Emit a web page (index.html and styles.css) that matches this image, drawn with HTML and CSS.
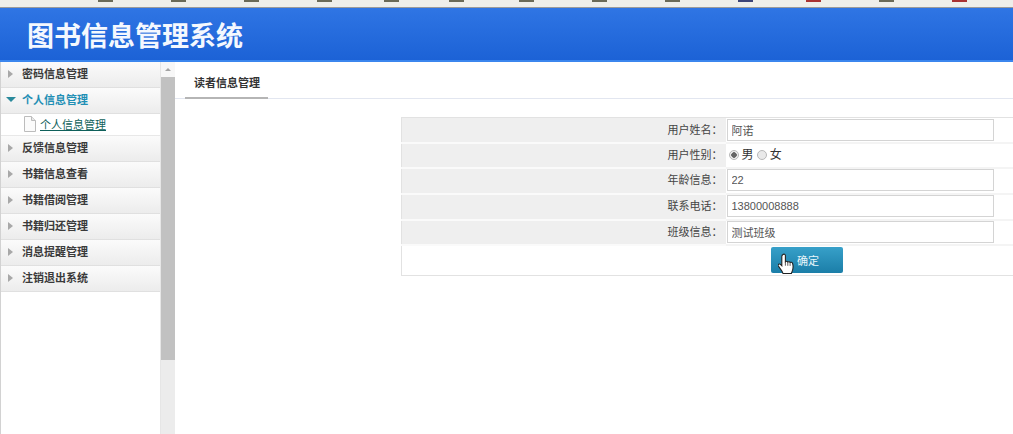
FILE: index.html
```html
<!DOCTYPE html>
<html lang="zh-CN">
<head>
    <meta charset="UTF-8">
    <meta name="viewport" content="width=device-width, initial-scale=1.0">
    <title>图书信息管理系统</title>
    <link rel="stylesheet" href="styles.css">
</head>
<body>
    <div class="tabstrip">
        <i></i><i></i><i></i><i></i><i></i><i></i><i></i><i></i><i></i><i class="navy"></i><i class="red"></i><i></i><i class="red"></i>
    </div>
    <div class="header">图书信息管理系统</div>
    <div class="main">
        <div class="side">
            <div class="menu">
                <div class="menu-item"><span class="arrow"></span>密码信息管理</div>
                <div class="menu-item open"><span class="arrow"></span>个人信息管理</div>
                <div class="sub-item">
                    <svg width="12" height="16" viewBox="0 0 12 16"><path d="M.5.5h7l4 4v11h-11z" fill="#fbfbfb" stroke="#bcbcbc"/><path d="M7.500.5v4h4" fill="#e8e8e8" stroke="#bcbcbc"/></svg>
                    <a href="#">个人信息管理</a>
                </div>
                <div class="menu-item"><span class="arrow"></span>反馈信息管理</div>
                <div class="menu-item"><span class="arrow"></span>书籍信息查看</div>
                <div class="menu-item"><span class="arrow"></span>书籍借阅管理</div>
                <div class="menu-item"><span class="arrow"></span>书籍归还管理</div>
                <div class="menu-item"><span class="arrow"></span>消息提醒管理</div>
                <div class="menu-item"><span class="arrow"></span>注销退出系统</div>
            </div>
            <div class="scrollbar">
                <div class="scroll-up"></div>
                <div class="scroll-thumb"></div>
            </div>
        </div>
        <div class="content">
            <div class="tabs"><div class="tab">读者信息管理</div></div>
            <table class="form">
                <tr>
                    <td class="label">用户姓名：</td>
                    <td><input type="text" value="阿诺"></td>
                </tr>
                <tr>
                    <td class="label">用户性别：</td>
                    <td class="radios">
                        <label><input type="radio" name="sex" checked>男</label>
                        <label><input type="radio" name="sex">女</label>
                    </td>
                </tr>
                <tr class="tall">
                    <td class="label">年龄信息：</td>
                    <td><input type="text" value="22"></td>
                </tr>
                <tr class="tall">
                    <td class="label">联系电话：</td>
                    <td><input type="text" value="13800008888"></td>
                </tr>
                <tr class="last">
                    <td class="label">班级信息：</td>
                    <td><input type="text" value="测试班级"></td>
                </tr>
                <tr>
                    <td colspan="2" class="actions">
                        <span class="btn-wrap">
                            <button type="button" class="btn">确定</button>
                            <svg class="hand" width="18" height="23" viewBox="0 0 18 23"><path d="M5 1.500c1-.8 2.300-.3 2.400 1v6.200c.8-.5 1.900-.4 2.400.3.800-.5 1.900-.3 2.300.4.900-.4 2-.1 2.400.8.700 1.800.6 5 .1 7l-1.200 3.300h-8.400l-1-2.300-3.800-5.500c-.6-1.200 1-2.300 2.200-1.300l1.400 1.300v-9.200c0-.8.300-1.500 1.200-2z" fill="#fff" stroke="#222" stroke-width="1.100"/><path d="M7.400 8.700v4M9.800 9v3.800M12.100 9.400v3.500" fill="none" stroke="#333" stroke-width=".8"/></svg>
                        </span>
                    </td>
                </tr>
            </table>
        </div>
    </div>
</body>
</html>
```

FILE: styles.css
```css
* {
    box-sizing: border-box;
}
html, body {
    height: 100%;
}
body {
    margin: 0;
    overflow: hidden;
    display: flex;
    flex-direction: column;
    background: #fff;
    font-family: "Liberation Sans", "Noto Sans CJK SC", sans-serif;
    font-size: 11px;
    color: #333;
}

/* browser strip on top */
.tabstrip {
    height: 8px;
    flex: none;
    display: flex;
    gap: 58px;
    padding-left: 98px;
    background: #eeeeea;
    border-bottom: 1px solid #9a9a9a;
}
.tabstrip i {
    width: 15px;
    height: 2px;
    background: #6a6a58;
}
.tabstrip i:nth-child(5) {
    margin-left: -6px;
}
.tabstrip i:nth-child(6) {
    margin-left: -8px;
}
.tabstrip i:nth-child(7) {
    margin-left: -3px;
}
.tabstrip i:nth-child(11) {
    margin-left: -5px;
}
.tabstrip i.red {
    background: #a83232;
}
.tabstrip i.navy {
    background: #3c4478;
}

.header {
    height: 54px;
    flex: none;
    padding: 11px 0 0 27px;
    background: linear-gradient(#2f75e4, #1c62d6);
    border-bottom: 2px solid #3b86ee;
    font-size: 27px;
    line-height: 36px;
    font-weight: bold;
    color: #f4f8fe;
}

.main {
    flex: 1;
    display: flex;
    min-height: 0;
}

/* left menu */
.side {
    width: 175px;
    flex: none;
    display: flex;
}
.menu {
    width: 161px;
    border-right: 1px solid #e6e6e6;
    border-left: 1px solid #d2d2d2;
}
.menu-item {
    height: 26px;
    display: flex;
    align-items: center;
    padding: 0 0 2px 7px;
    background: linear-gradient(#fbfbfb, #ececec);
    border-bottom: 1px solid #e0e0e0;
    font-weight: bold;
    color: #3a3a3a;
    line-height: 22px;
}
.arrow {
    width: 0;
    height: 0;
    margin-right: 9px;
    border-left: 5px solid #a8a8a8;
    border-top: 4px solid transparent;
    border-bottom: 4px solid transparent;
}
.menu-item.open {
    color: #1f8fb5;
}
.menu-item.open .arrow {
    margin-left: -2px;
    margin-right: 6px;
    border-left: 5px solid transparent;
    border-right: 5px solid transparent;
    border-top: 5px solid #2a8a9c;
    border-bottom: 0;
}
.sub-item {
    height: 22px;
    display: flex;
    align-items: center;
    gap: 4px;
    padding: 0 0 2px 23px;
    border-bottom: 1px solid #e8e8e8;
}
.sub-item a {
    color: #0e5f5a;
}

.scrollbar {
    width: 14px;
    background: #ececec;
}
.scroll-up {
    height: 15px;
    position: relative;
    background: #f7f7f7;
}
.scroll-up::after {
    content: "";
    position: absolute;
    left: 4px;
    top: 6px;
    border-left: 3px solid transparent;
    border-right: 3px solid transparent;
    border-bottom: 3px solid #a3a3a3;
}
.scroll-thumb {
    height: 283px;
    background: #c1c1c1;
}

/* right side */
.content {
    flex: 1;
    min-width: 0;
}
.tabs {
    height: 37px;
    padding: 8px 0 0 10px;
    border-bottom: 1px solid #e2e6f0;
}
.tab {
    width: 83px;
    height: 29px;
    border-bottom: 2px solid #b5b5b5;
    padding-left: 9px;
    line-height: 27px;
    font-weight: bold;
    color: #333;
}
.form {
    width: 612px;
    margin: 18px 0 0 226px;
    border-collapse: collapse;
    border-top: 1px solid #e2e2e2;
    border-left: 1px solid #e2e2e2;
}
.form td {
    height: 25px;
    padding: 0;
    border-bottom: 2px solid #f4f4f4;
}
.form .tall td {
    height: 26px;
    vertical-align: top;
}
.form .last td {
    vertical-align: top;
}
.form td.label {
    width: 324px;
    padding-right: 3px;
    text-align: right;
    background: #efefef;
    border-bottom: 2px solid #fafafa;
    color: #444;
    line-height: 22px;
}
.form input[type="text"] {
    display: block;
    width: 267px;
    height: 22px;
    margin-left: 1px;
    padding: 0 4px;
    border: 1px solid #d4d4d4;
    font: 11px "Liberation Sans", "Noto Sans CJK SC", sans-serif;
    color: #555;
    background: #fff;
}
.radios {
    padding-left: 3px !important;
    font-size: 12px;
    line-height: 20px;
}
.radios label {
    display: inline-flex;
    align-items: center;
}
.radios input {
    appearance: none;
    width: 10px;
    height: 10px;
    margin: 0 3px 0 0;
    border: 1px solid #b9b9b9;
    border-radius: 50%;
    background: #e9e9e9;
}
.radios input:checked {
    background: radial-gradient(circle, #666 0 2.500px, #efefef 3px);
}
.form td.actions {
    height: 31px;
    text-align: left;
    padding-left: 369px;
    border-bottom: 1px solid #e2e2e2;
}
.btn-wrap {
    position: relative;
    display: inline-block;
    vertical-align: middle;
}
.btn {
    display: block;
    width: 72px;
    height: 26px;
    padding: 0 0 0 2px;
    border: 0;
    border-radius: 2px;
    background: linear-gradient(#37a0c9, #1b7ea8);
    font: 11px "Liberation Sans", "Noto Sans CJK SC", sans-serif;
    color: #e8f6fb;
}
.hand {
    position: absolute;
    left: 7px;
    top: 6px;
}
```
